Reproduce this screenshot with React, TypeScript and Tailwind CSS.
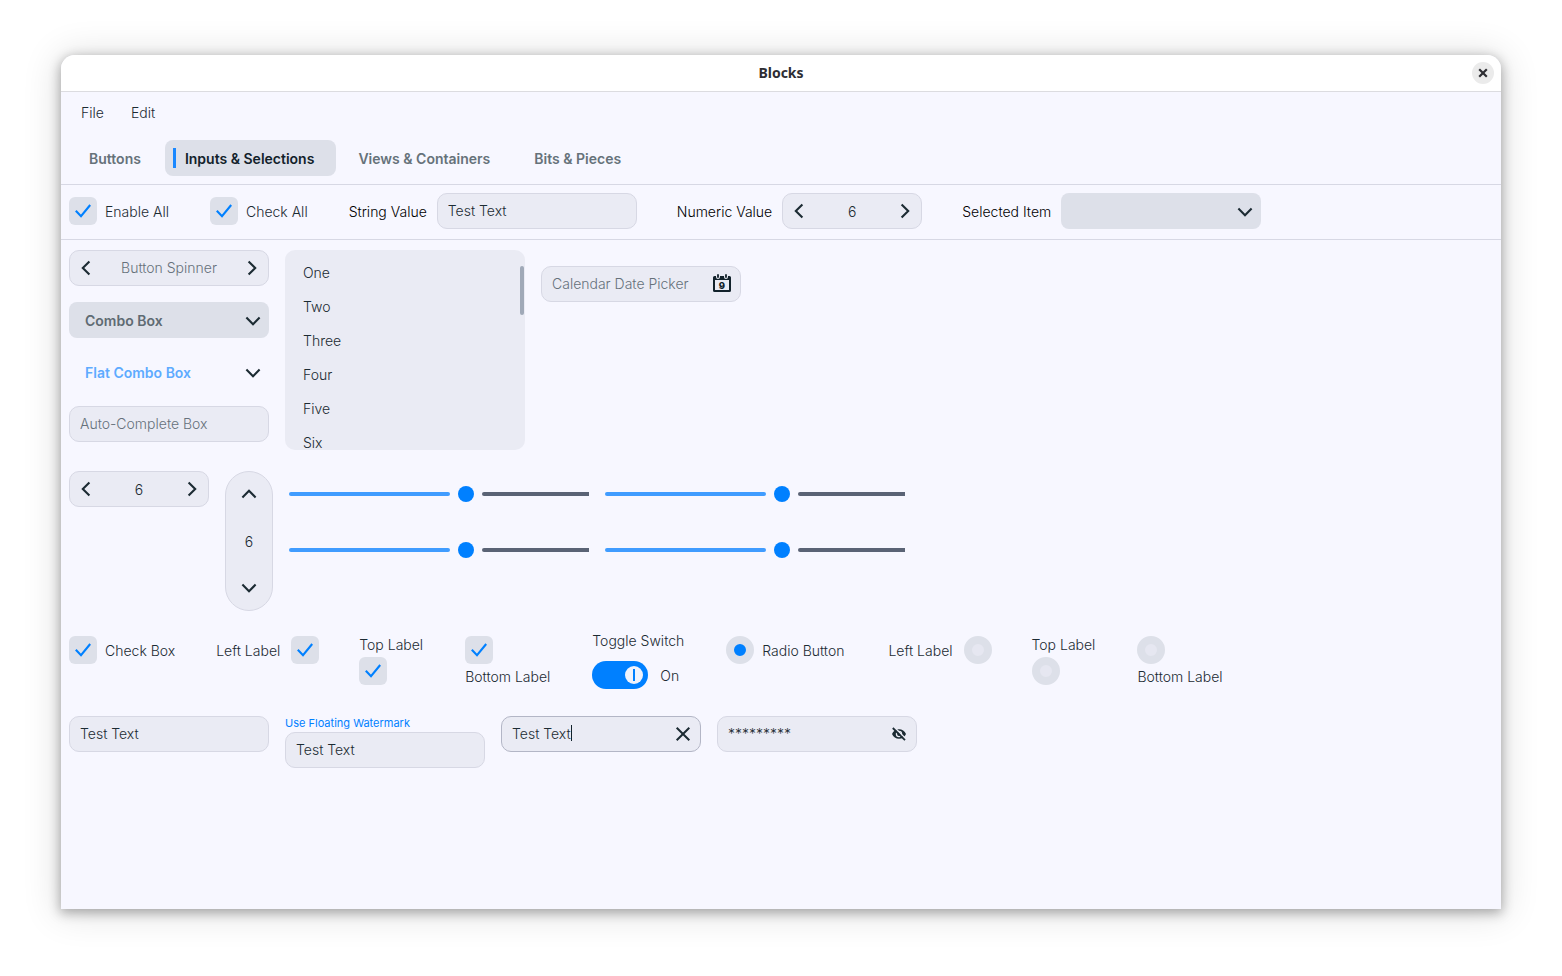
import { useState } from "react";
import type { ReactNode } from "react";

type Direction = "left" | "right" | "up" | "down";
type Side = "left" | "right" | "top" | "bottom";

const chevronPaths: Record<Direction, string> = {
  left: "M11.4 1.4 4.8 8l6.600 6.600",
  right: "M4.600 1.400 11.200 8l-6.600 6.600",
  up: "M1.400 11.400 8 4.800l6.600 6.600",
  down: "M1.400 4.600 8 11.200l6.600-6.600",
};

function Chevron({ direction }: { direction: Direction }) {
  return (
    <svg viewBox="0 0 16 16" className="block size-4 shrink-0" fill="none" stroke="#1c2b33" strokeWidth="2.1" aria-hidden="true">
      <path d={chevronPaths[direction]} />
    </svg>
  );
}

const field = "block h-9 w-50 rounded-[10px] border border-[#d7d8e4] bg-[#eaebf4] px-2.5 pb-0.5 font-light outline-none";

const layouts: Record<Side, string> = {
  right: "items-center gap-2",
  left: "flex-row-reverse items-center gap-[11px]",
  top: "flex-col-reverse items-start gap-[3px]",
  bottom: "flex-col items-start gap-1",
};

const captions: Record<Side, string> = {
  right: "pt-0.5",
  left: "pt-0.5",
  top: "pr-0.5 leading-[18px]",
  bottom: "pr-0.5 leading-[18px]",
};

function Check({ label, side = "right" }: { label: string; side?: Side }) {
  const [on, setOn] = useState(true);
  return (
    <label className={`flex ${layouts[side]}`}>
      <span className="relative size-7 shrink-0">
        <input
          type="checkbox"
          checked={on}
          onChange={(e) => setOn(e.target.checked)}
          className="block size-7 appearance-none rounded-md bg-[#dde0e9]"
        />
        {on && (
          <svg viewBox="0 0 28 28" className="pointer-events-none absolute inset-0" fill="none" stroke="#0080ff" strokeWidth="2.1" aria-hidden="true">
            <path d="M6.8 13.7 12 19.2 21.2 8" />
          </svg>
        )}
      </span>
      <span className={`${captions[side]} ${side === "right" ? "pr-px" : ""}`}>{label}</span>
    </label>
  );
}

function Radio({ label, side = "right", defaultChecked = false }: { label: string; side?: Side; defaultChecked?: boolean }) {
  return (
    <label className={`flex ${layouts[side]}`}>
      <input
        type="radio"
        name="choice"
        defaultChecked={defaultChecked}
        className="block size-7 shrink-0 appearance-none rounded-full border-8 border-[#dde0e9] bg-[#e6e7f1] checked:bg-[#0080ff]"
      />
      <span className={`${captions[side]} ${side === "right" ? "pr-1" : ""}`}>{label}</span>
    </label>
  );
}

function NumberSpinner({ id, label }: { id: string; label: string }) {
  const [value, setValue] = useState(6);
  return (
    <div className="flex h-9 w-35 items-center rounded-[10px] border border-[#d7d8e4] bg-[#eaebf4] px-2">
      <button type="button" aria-label={`Decrease ${label}`} onClick={() => setValue(value - 1)}>
        <Chevron direction="left" />
      </button>
      <input
        id={id}
        aria-label={label}
        value={value}
        onChange={(e) => setValue(Number(e.target.value) || 0)}
        className="w-0 flex-1 pt-0.5 text-center font-light outline-none"
      />
      <button type="button" aria-label={`Increase ${label}`} onClick={() => setValue(value + 1)}>
        <Chevron direction="right" />
      </button>
    </div>
  );
}

function Combo({ id, label, text, tone }: { id: string; label: string; text: string; tone: string }) {
  return (
    <div className="relative w-50">
      <select id={id} aria-label={label} className={`block h-9 w-full appearance-none rounded-lg px-4 pt-0.5 font-semibold outline-none ${tone}`}>
        <option>{text}</option>
      </select>
      <span className="pointer-events-none absolute inset-y-0 right-2 flex items-center pt-0.5">
        <Chevron direction="down" />
      </span>
    </div>
  );
}

function Slider({ label }: { label: string }) {
  const [value, setValue] = useState(5.95);
  const ratio = value / 10;
  return (
    <div className="relative flex h-[46px] w-75 items-center gap-8">
      <span className="h-1 shrink-0 rounded-xs bg-[#409cff]" style={{ width: `calc(${ratio * 100}% - ${8 + 16 * ratio}px)` }} />
      <span className="h-1 flex-1 rounded-l-xs bg-[#5a6375]" />
      <input
        type="range"
        min={0}
        max={10}
        step={0.01}
        value={value}
        aria-label={label}
        onChange={(e) => setValue(Number(e.target.value))}
        className="absolute inset-0 w-full appearance-none bg-transparent outline-none [&::-webkit-slider-thumb]:size-4 [&::-webkit-slider-thumb]:appearance-none [&::-webkit-slider-thumb]:rounded-full [&::-webkit-slider-thumb]:bg-[#0080ff]"
      />
    </div>
  );
}

function Tab({ children, selected = false }: { children: ReactNode; selected?: boolean }) {
  return (
    <button
      type="button"
      role="tab"
      aria-selected={selected}
      className={`relative h-9 rounded-lg pt-0.5 pr-[22px] pl-5 font-semibold ${selected ? "bg-[#dde0e9] text-[#12222b]" : "text-[#66727a]"}`}
    >
      {selected && <span className="absolute top-2 left-2 h-5 w-[3px] bg-[#1a88ff]" />}
      {children}
    </button>
  );
}

function ToggleSwitch() {
  const [on, setOn] = useState(true);
  return (
    <div className="flex flex-col items-start gap-2.5">
      <label htmlFor="toggle" className="pr-0.5">Toggle Switch</label>
      <div className="flex items-center gap-3">
        <span className="relative h-7 w-14">
          <input
            id="toggle"
            type="checkbox"
            role="switch"
            checked={on}
            onChange={(e) => setOn(e.target.checked)}
            className="block h-7 w-14 appearance-none rounded-full bg-[#5a6375] checked:bg-[#0080ff]"
          />
          <span className={`pointer-events-none absolute top-[5px] flex size-[18px] items-center justify-center rounded-full bg-[#f0f3fc] ${on ? "right-[5px]" : "left-[5px]"}`}>
            <span className="h-3 w-0.5 bg-[#0080ff]" />
          </span>
        </span>
        <span className="pt-0.5">{on ? "On" : "Off"}</span>
      </div>
    </div>
  );
}

const numbers = ["One", "Two", "Three", "Four", "Five", "Six"];

export default function App() {
  const [vertical, setVertical] = useState(6);
  return (
    <div className="flex min-h-screen bg-white px-[61px] pt-[55px] pb-[67px] font-['Inter',sans-serif] text-sm leading-5 font-light text-[#1c2b33]">
      <div className="flex min-w-0 flex-1 flex-col rounded-t-[14px] bg-[#f7f7ff] shadow-[0_3px_12px_1px_rgba(0,0,0,0.3),0_2px_36px_4px_rgba(0,0,0,0.12)]">
        <header className="grid h-[37px] grid-cols-[1fr_auto_1fr] items-center rounded-t-[14px] border-b border-[#dcdce0] bg-white px-[7px]">
          <h1 className="col-start-2 font-['Noto_Sans',sans-serif] text-sm font-bold text-[#2e2e33]">Blocks</h1>
          <button type="button" aria-label="Close" className="flex size-[22px] items-center justify-center justify-self-end rounded-full bg-[#ebebeb]">
            <svg viewBox="0 0 10 10" className="size-2.5" fill="none" stroke="#2e2e33" strokeWidth="2.2" aria-hidden="true">
              <path d="m1.2 1.2 7.6 7.6M8.8 1.2 1.2 8.8" />
            </svg>
          </button>
        </header>

        <nav className="flex h-[42px] items-center gap-[3px] px-2">
          <button type="button" className="px-3">File</button>
          <button type="button" className="px-3">Edit</button>
        </nav>

        <div role="tablist" className="flex gap-0.5 border-b border-[#d7d8e4] px-2 pt-1.5 pb-2">
          <Tab>Buttons</Tab>
          <Tab selected>Inputs &amp; Selections</Tab>
          <Tab>Views &amp; Containers</Tab>
          <Tab>Bits &amp; Pieces</Tab>
        </div>

        <div className="flex flex-wrap items-center gap-x-10 gap-y-2 border-b border-[#d7d8e4] px-2 pt-2 pb-2.5">
          <Check label="Enable All" />
          <Check label="Check All" />
          <div className="flex items-center gap-2.5">
            <label htmlFor="string" className="pt-0.5 text-black">String Value</label>
            <input id="string" defaultValue="Test Text" className={field} />
          </div>
          <div className="flex items-center gap-2.5">
            <label htmlFor="numeric" className="pt-0.5 text-black">Numeric Value</label>
            <NumberSpinner id="numeric" label="Numeric Value" />
          </div>
          <div className="flex items-center gap-2.5">
            <label htmlFor="selected" className="pt-0.5 text-black">Selected Item</label>
            <Combo id="selected" label="Selected Item" text="" tone="bg-[#dde0e9]" />
          </div>
        </div>

        <main className="flex flex-col px-2 pt-2.5">
          <section className="flex flex-wrap items-start gap-4">
            <div className="flex flex-col gap-4">
              <div className="flex h-9 w-50 items-center justify-between rounded-[10px] border border-[#d7d8e4] bg-[#eaebf4] px-2">
                <button type="button" aria-label="Previous"><Chevron direction="left" /></button>
                <span className="text-[#66717b]">Button Spinner</span>
                <button type="button" aria-label="Next"><Chevron direction="right" /></button>
              </div>
              <Combo id="combo" label="Combo Box" text="Combo Box" tone="bg-[#dde0e9] text-[#5f6b73]" />
              <Combo id="flat" label="Flat Combo Box" text="Flat Combo Box" tone="text-[#5eabff]" />
              <input aria-label="Auto-Complete Box" placeholder="Auto-Complete Box" className={`${field} placeholder:text-[#66717b]`} />
            </div>

            <div className="relative h-50 w-60 overflow-hidden rounded-[10px] bg-[#eaebf4] pt-1.5">
              <ul role="listbox" aria-label="Numbers">
                {numbers.map((name) => (
                  <li key={name} role="option" aria-selected="false" className="flex h-[34px] items-center px-[18px]">
                    {name}
                  </li>
                ))}
              </ul>
              <span className="absolute top-4 right-px h-[49px] w-1 rounded-xs bg-[#a0a9b8]" />
            </div>

            <div className="relative mt-4">
              <input aria-label="Calendar Date Picker" placeholder="Calendar Date Picker" className={`${field} placeholder:text-[#66717b]`} />
              <button type="button" aria-label="Open calendar" className="absolute inset-y-0 right-2.5 flex items-center pb-0.5">
                <svg viewBox="0 0 18 18" className="size-[18px]" aria-hidden="true">
                  <path fill="#12222b" fillRule="evenodd" d="M1.5 2H3v1a2 2 0 0 0 4 0V2h4v1a2 2 0 0 0 4 0V2h1.5A1.5 1.5 0 0 1 18 3.500v13a1.500 1.500 0 0 1-1.500 1.500h-15A1.500 1.500 0 0 1 0 16.500v-13A1.500 1.500 0 0 1 1.500 2ZM2 6v10h14V6Z" />
                  <path stroke="#12222b" strokeWidth="1.800" strokeLinecap="round" d="M5 1v2M13 1v2" />
                  <text x="9" y="14.500" textAnchor="middle" fontSize="9.500" fontWeight="800" fill="#12222b" className="font-['Inter',sans-serif]">9</text>
                </svg>
              </button>
            </div>
          </section>

          <section className="mt-[21px] flex flex-wrap items-start gap-4">
            <NumberSpinner id="amount" label="Amount" />
            <div className="flex h-35 w-12 flex-col items-center justify-between rounded-full border border-[#d7d8e4] bg-[#eaebf4] py-3.5">
              <button type="button" aria-label="Increase" onClick={() => setVertical(vertical + 1)}><Chevron direction="up" /></button>
              <input aria-label="Vertical amount" value={vertical} onChange={(e) => setVertical(Number(e.target.value) || 0)} className="w-8 pt-0.5 text-center font-light outline-none" />
              <button type="button" aria-label="Decrease" onClick={() => setVertical(vertical - 1)}><Chevron direction="down" /></button>
            </div>
            <div className="grid grid-cols-[auto_auto] gap-x-4 gap-y-2.5">
              <Slider label="Slider one" />
              <Slider label="Slider two" />
              <Slider label="Slider three" />
              <Slider label="Slider four" />
            </div>
          </section>

          <section className="mt-5 flex flex-wrap items-start gap-x-10">
            <div className="flex items-start gap-10 pt-[5px]">
              <Check label="Check Box" />
              <Check label="Left Label" side="left" />
              <Check label="Top Label" side="top" />
              <Check label="Bottom Label" side="bottom" />
            </div>
            <ToggleSwitch />
            <div className="flex items-start gap-10 pt-[5px]">
              <Radio label="Radio Button" defaultChecked />
              <Radio label="Left Label" side="left" />
              <Radio label="Top Label" side="top" />
              <Radio label="Bottom Label" side="bottom" />
            </div>
          </section>

          <section className="mt-[27px] flex flex-wrap items-start gap-4">
            <input aria-label="Text" defaultValue="Test Text" className={field} />
            <div className="flex flex-col gap-0.5">
              <label htmlFor="floating" className="text-[11px] leading-[14px] font-normal text-[#0080ff]">Use Floating Watermark</label>
              <input id="floating" defaultValue="Test Text" className={field} />
            </div>
            <div className="relative">
              <input aria-label="Clearable text" defaultValue="Test Text" className={`${field} border-[#b3b6c6]!`} />
              <span className="pointer-events-none absolute top-[9px] left-[70px] h-4 w-px bg-[#12222b]" />
              <button type="button" aria-label="Clear" className="absolute inset-y-0 right-2.5 flex items-center">
                <svg viewBox="0 0 16 16" className="size-4" fill="none" stroke="#1c2b33" strokeWidth="2" aria-hidden="true">
                  <path d="m1.700 1.700 12.600 12.600M14.300 1.700 1.700 14.300" />
                </svg>
              </button>
            </div>
            <div className="relative">
              <input aria-label="Password" defaultValue="*********" className={field} />
              <button type="button" aria-label="Reveal password" className="absolute inset-y-0 right-2.5 flex items-center">
                <svg viewBox="0 0 16 16" className="size-4" fill="none" aria-hidden="true">
                  <path fill="#1c2b33" fillRule="evenodd" d="M1 8C2.200 5 5 3.200 8 3.200S13.800 5 15 8c-1.200 3-4 4.800-7 4.800S2.200 11 1 8Zm7-3.200a3.200 3.200 0 1 0 0 6.400 3.200 3.200 0 0 0 0-6.400Z" />
                  <circle cx="8" cy="8" r="1.900" fill="#1c2b33" />
                  <path stroke="#eaebf4" strokeWidth="1.500" d="m3.100 1.100 12.200 12.200" />
                  <path stroke="#1c2b33" strokeWidth="1.800" d="m1.800 2 12.200 12.200" />
                </svg>
              </button>
            </div>
          </section>
        </main>
      </div>
    </div>
  );
}
